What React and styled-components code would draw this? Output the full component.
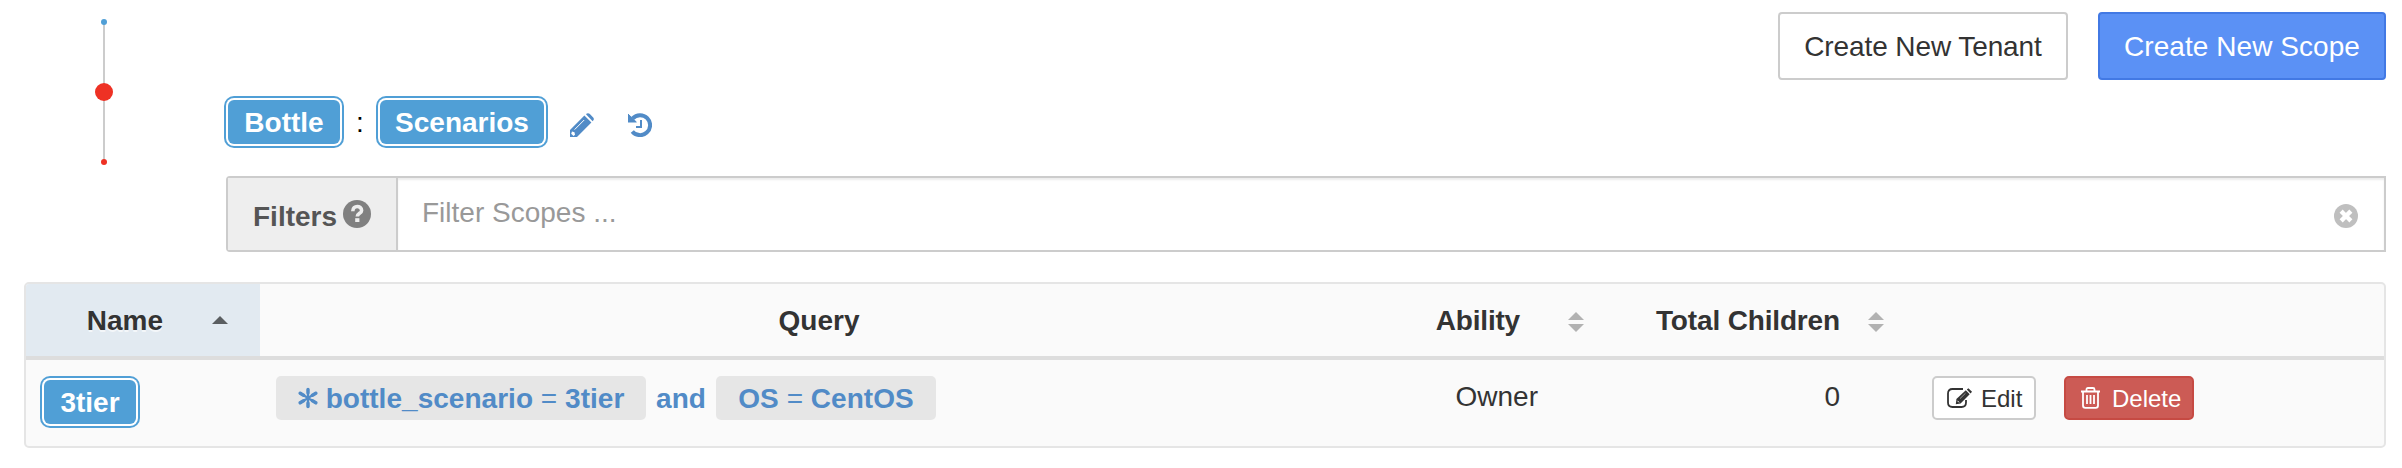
import React from "react";
import styled, { createGlobalStyle } from "styled-components";

const Global = createGlobalStyle`
  *{box-sizing:border-box}
  body{margin:0;background:#fff;color:#333;font:28px/40px "Liberation Sans",Arial,sans-serif}
`;
const Page = styled.main`width:2402px;height:468px;padding:12px 16px 0 24px;overflow:hidden;`;
const Top = styled.div`display:flex;height:240px;`;
const Tree = styled.svg`width:202px;height:180px;flex:none;`;
const Main = styled.div`flex:1;min-width:0;`;
const Actions = styled.div`display:flex;justify-content:flex-end;gap:30px;height:68px;`;
const Button = styled.button`
  font:28px/40px "Liberation Sans",Arial,sans-serif;height:68px;padding:2px 0 0;white-space:nowrap;
  width:${p => (p.$primary ? 288 : 290)}px;border-radius:4px;
  border:2px solid ${p => (p.$primary ? "#4279e4" : "#ccc")};
  background:${p => (p.$primary ? "#5b91f5" : "#fff")};
  color:${p => (p.$primary ? "#fff" : "#333")};
  letter-spacing:${p => (p.$primary ? 0.05 : -0.1)}px;
`;
const Crumbs = styled.div`display:flex;align-items:center;height:44px;margin:20px 0 0 2px;color:#000;`;
const Tag = styled.span`
  display:inline-block;width:${p => p.$w}px;height:44px;line-height:45px;text-align:center;
  border-radius:6px;background:#509fd6;color:#fff;font-weight:700;
  box-shadow:0 0 0 2px #fff,0 0 0 4px #509fd6;
`;
const Colon = styled.span`width:40px;text-align:center;line-height:40px;padding-top:2px;`;
const Link = styled.a`display:flex;color:#518bc7;margin-left:${p => p.$gap}px;padding-top:5px;`;
const Filter = styled.div`display:flex;height:76px;margin-top:32px;border:2px solid #ccc;border-radius:4px 0 0 4px;`;
const FilterLabel = styled.label`
  display:flex;align-items:center;width:170px;padding:6px 0 0 25px;gap:6px;background:#eee;
  border-right:2px solid #ccc;color:#555;font-weight:700;
  svg{margin-top:-6px}
`;
const FilterInput = styled.div`
  flex:1;display:flex;align-items:center;justify-content:space-between;padding:0 26px 0 24px;color:#999;
  box-shadow:inset 0 2px 2px rgba(0,0,0,.075);
  span{margin-top:-3px} svg{margin-top:4px}
`;
const Table = styled.section`
  margin-top:30px;width:2362px;height:166px;border:2px solid #e5e5e5;border-radius:5px;background:#fafafa;overflow:hidden;
`;
const Row = styled.div`display:grid;grid-template-columns:234px 1118px 234px 300px 1fr;height:${p => (p.$head ? 76 : 86)}px;
  ${p => p.$head && "border-bottom:4px solid #ddd;font-weight:700;"}`;
const Head = styled.div`
  display:flex;align-items:center;justify-content:${p => p.$justify || "flex-end"};gap:${p => p.$gap || 0}px;
  padding:2px ${p => p.$right || 0}px 0 0;background:${p => (p.$active ? "#e2eaf1" : "transparent")};
  text-shadow:0 2px 0 rgba(255,255,255,.6);letter-spacing:${p => p.$track || 0}px;
  svg{margin-top:${p => (p.$active ? -2 : 1)}px}
`;
const Cell = styled.div`display:flex;align-items:flex-start;padding:${p => p.$pad};justify-content:${p => p.$justify || "flex-start"};`;
const Query = styled(Cell)`color:#518bc7;font-weight:700;line-height:45px;`;
const Chip = styled.span`
  display:flex;align-items:center;justify-content:center;gap:8px;width:${p => p.$w}px;height:44px;
  background:#e6e6e6;border-radius:5px;white-space:pre;letter-spacing:0.03px;
  i{font-style:normal;font-weight:400}
`;
const And = styled.span`width:70px;text-align:center;`;
const Small = styled.button`
  display:flex;align-items:center;height:44px;width:${p => p.$w}px;padding:1px 0 0 ${p => p.$left}px;gap:${p => p.$gap}px;
  font:24px/36px "Liberation Sans",Arial,sans-serif;border-radius:5px;
  border:2px solid ${p => (p.$danger ? "#c64a43" : "#ccc")};background:${p => (p.$danger ? "#cc5b55" : "#fff")};
  color:${p => (p.$danger ? "#fff" : "#333")};
  svg{margin-top:-2px}
`;
const RowActions = styled(Cell)`gap:28px;`;

const Pencil = () => (
  <svg width="24" height="24" viewBox="0 0 24 24" fill="currentColor">
    <path d="M0 24V17L14.4 2.6 21.4 9.6 7 24Z M16 1.2L16.8.6Q18.2-.4 19.6.8L23.2 4.4Q24.4 5.8 23.4 7.2L22.6 8.2Z" />
    <path d="M2 18.5L4.5 19.2 5 21.8 3.5 23 1.2 20.8Z" fill="#fff" />
    <path d="M4.6 16.6L14.2 7" stroke="#fff" strokeWidth="1" />
  </svg>
);
const History = () => (
  <svg width="24" height="24" viewBox="0 0 24 24" fill="none" stroke="currentColor">
    <path d="M4.7 5.4A10 10 0 1 1 4.3 18.4" strokeWidth="4" />
    <path d="M0 1V9H8.3Z" fill="currentColor" strokeWidth="1" strokeLinejoin="round" />
    <path d="M13 7V14H8" strokeWidth="2" />
  </svg>
);
const Help = () => (
  <svg width="28" height="28" viewBox="0 0 28 28">
    <circle cx="14" cy="14" r="14" fill="#808080" />
    <path d="M9.8 11.2C9.8 4.8 18.6 5.4 18.6 10.4C18.6 13.4 14.3 13.3 14.3 16.6" fill="none" stroke="#eee" strokeWidth="3.6" />
    <rect x="12.2" y="18.2" width="4.2" height="3.8" fill="#eee" />
  </svg>
);
const Clear = () => (
  <svg width="24" height="24" viewBox="0 0 24 24">
    <circle cx="12" cy="12" r="12" fill="#bfbfbf" />
    <path d="M8.7 8.7L15.3 15.3M15.3 8.7L8.7 15.3" stroke="#fff" strokeWidth="4.4" strokeLinecap="square" />
  </svg>
);
const Sort = () => (
  <svg width="16" height="20" viewBox="0 0 16 20" fill="#b2b2b2"><path d="M0 8L8 0L16 8ZM0 12H16L8 20Z" /></svg>
);
const Asterisk = () => (
  <svg width="20" height="22" viewBox="0 0 20 22" fill="none" stroke="currentColor" strokeLinecap="round">
    <path d="M10 2V20M2 6L18 16M18 6L2 16" strokeWidth="2.2" />
    <path d="M10 2.4V6M10 16V19.6M2.2 6.2L5.5 8.2M17.8 15.8L14.5 13.8M17.8 6.2L14.5 8.2M2.2 15.8L5.5 13.8" strokeWidth="3.4" />
  </svg>
);
const EditIcon = () => (
  <svg width="25" height="20" viewBox="0 0 25 20" fill="none" stroke="#333">
    <path d="M16 1H5.5Q1 1 1 5.5V14.5Q1 19 5.5 19H14.5Q19 19 19 14.5V12" strokeWidth="1.8" />
    <path d="M8.8 16.2L9.4 11L18.8 2.2L22.7 6.2L13.6 15.6Z" fill="#333" stroke="none" />
    <path d="M19.8 1.5L21.4.2L25 3.7L23.5 5.4Z" fill="#333" stroke="none" />
    <path d="M10.5 12.8L12 14.4" stroke="#fff" strokeWidth="1" />
    <path d="M13 10.6L18.5 5.2" stroke="#fff" strokeWidth=".5" />
  </svg>
);
const Trash = () => (
  <svg width="19" height="22" viewBox="0 0 19 22" fill="none" stroke="#fff" strokeWidth="1.8">
    <path d="M0 4.5H19M5.5 4V2.5Q5.5 1 7 1H12Q13.5 1 13.5 2.5V4M2 5V18.5Q2 20.8 4.3 20.8H14.7Q17 20.8 17 18.5V5M6 8V17M9.5 8V17M13 8V17" />
  </svg>
);

export default function App() {
  return (
    <Page>
      <Global />
      <Top>
        <Tree viewBox="24 12 202 180">
          <path d="M104 22V162" stroke="#ccc" strokeWidth="2" />
          <circle cx="104" cy="22" r="3" fill="#509fd6" />
          <circle cx="104" cy="92" r="9" fill="#ee3124" />
          <circle cx="104" cy="162" r="3" fill="#ee3124" />
        </Tree>
        <Main>
          <Actions>
            <Button>Create New Tenant</Button>
            <Button $primary>Create New Scope</Button>
          </Actions>
          <Crumbs>
            <Tag $w={112}>Bottle</Tag>
            <Colon>:</Colon>
            <Tag $w={164}>Scenarios</Tag>
            <Link $gap={26}><Pencil /></Link>
            <Link $gap={34}><History /></Link>
          </Crumbs>
          <Filter>
            <FilterLabel>Filters <Help /></FilterLabel>
            <FilterInput><span>Filter Scopes ...</span><Clear /></FilterInput>
          </Filter>
        </Main>
      </Top>
      <Table>
        <Row $head>
          <Head $active $gap={49} $right={32}>
            Name
            <svg width="16" height="8" viewBox="0 0 16 8"><path d="M0 8L8 0L16 8Z" fill="#5a5e61" /></svg>
          </Head>
          <Head $justify="center">Query</Head>
          <Head $gap={48} $right={28} $track={-0.2}>Ability <Sort /></Head>
          <Head $gap={28} $right={28} $track={-0.15}>Total Children <Sort /></Head>
          <Head />
        </Row>
        <Row>
          <Cell $pad="20px 0 0 18px"><Tag $w={92}>3tier</Tag></Cell>
          <Query $pad="16px 0 0 16px">
            <Chip $w={370}><Asterisk /><span>bottle_scenario <i>=</i> 3tier</span></Chip>
            <And>and</And>
            <Chip $w={220}><span>OS <i>=</i> CentOS</span></Chip>
          </Query>
          <Cell $pad="17px 74px 0 0" $justify="flex-end">Owner</Cell>
          <Cell $pad="17px 72px 0 0" $justify="flex-end">0</Cell>
          <RowActions $pad="16px 0 0 20px">
            <Small $w={104} $left={13} $gap={9}><EditIcon />Edit</Small>
            <Small $danger $w={130} $left={15} $gap={12}><Trash />Delete</Small>
          </RowActions>
        </Row>
      </Table>
    </Page>
  );
}
